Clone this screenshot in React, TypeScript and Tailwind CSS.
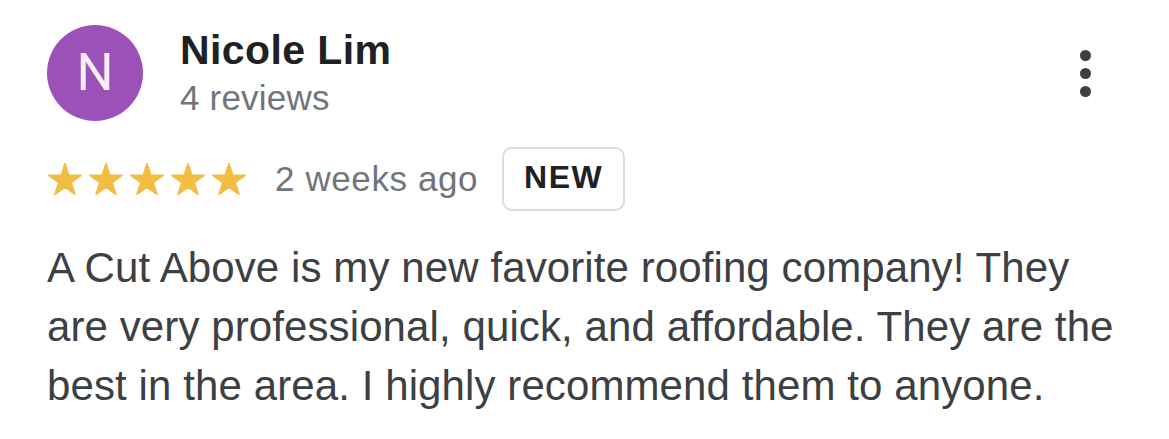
import React from "react";

function Star() {
  return (
    <svg width="36" height="33" viewBox="0 0 36 33">
      <polygon
        points="18,0.8 21.82,12.24 34.17,12.25 24.18,19.51 27.99,31.25 18,24 8.01,31.25 11.82,19.51 1.83,12.25 14.18,12.24"
        fill="#f1bd42"
        stroke="#f1bd42"
        strokeWidth="1.6"
        strokeLinejoin="round"
      />
    </svg>
  );
}

export default function App() {
  return (
    <div
      className="w-[1169px] h-[439px] bg-white overflow-hidden pl-[47px] pr-[78px] pt-[25px]"
      style={{ fontFamily: '"Liberation Sans", Arial, sans-serif' }}
    >
      <div className="flex justify-between items-start">
        <div className="flex items-start gap-[37px]">
          <div
            className="w-[96px] h-[96px] rounded-full bg-[#9b51b8] flex items-center justify-center text-[52px] leading-none text-[#f7eef9]"
            style={{ fontFamily: "Roboto, sans-serif" }}
          >
            N
          </div>
          <div className="flex flex-col mt-[2px]">
            <div className="text-[41px] leading-[46px] font-bold tracking-[0.4px] text-[#202124]">Nicole Lim</div>
            <div className="text-[35px] leading-[37px] mt-[6px] tracking-[0.2px] text-[#70757a]">4 reviews</div>
          </div>
        </div>
        <div className="flex flex-col gap-[7px] mt-[25px]">
          <div className="w-[11px] h-[11px] rounded-full bg-[#3c4043]" />
          <div className="w-[11px] h-[11px] rounded-full bg-[#3c4043]" />
          <div className="w-[11px] h-[11px] rounded-full bg-[#3c4043]" />
        </div>
      </div>

      <div className="flex items-center mt-[26px] h-[64px]">
        <div className="flex gap-[5px]">
          <Star />
          <Star />
          <Star />
          <Star />
          <Star />
        </div>
        <div className="ml-[28px] text-[35px] leading-[40px] tracking-[0.6px] text-[#70757a]">2 weeks ago</div>
        <div className="ml-[24px] w-[123px] h-[64px] border-2 border-[#dadce0] rounded-[10px] flex items-center justify-center pb-[4px]">
          <span className="text-[32px] leading-none font-bold tracking-[1.5px] text-[#202124]">NEW</span>
        </div>
      </div>

      <p className="mt-[27px] text-[42px] leading-[59px] tracking-[0.1px] text-[#3c4043] whitespace-nowrap">
        A Cut Above is my new favorite roofing company! They
        <br />
        are very professional, quick, and affordable. They are the
        <br />
        best in the area. I highly recommend them to anyone.
      </p>
    </div>
  );
}
